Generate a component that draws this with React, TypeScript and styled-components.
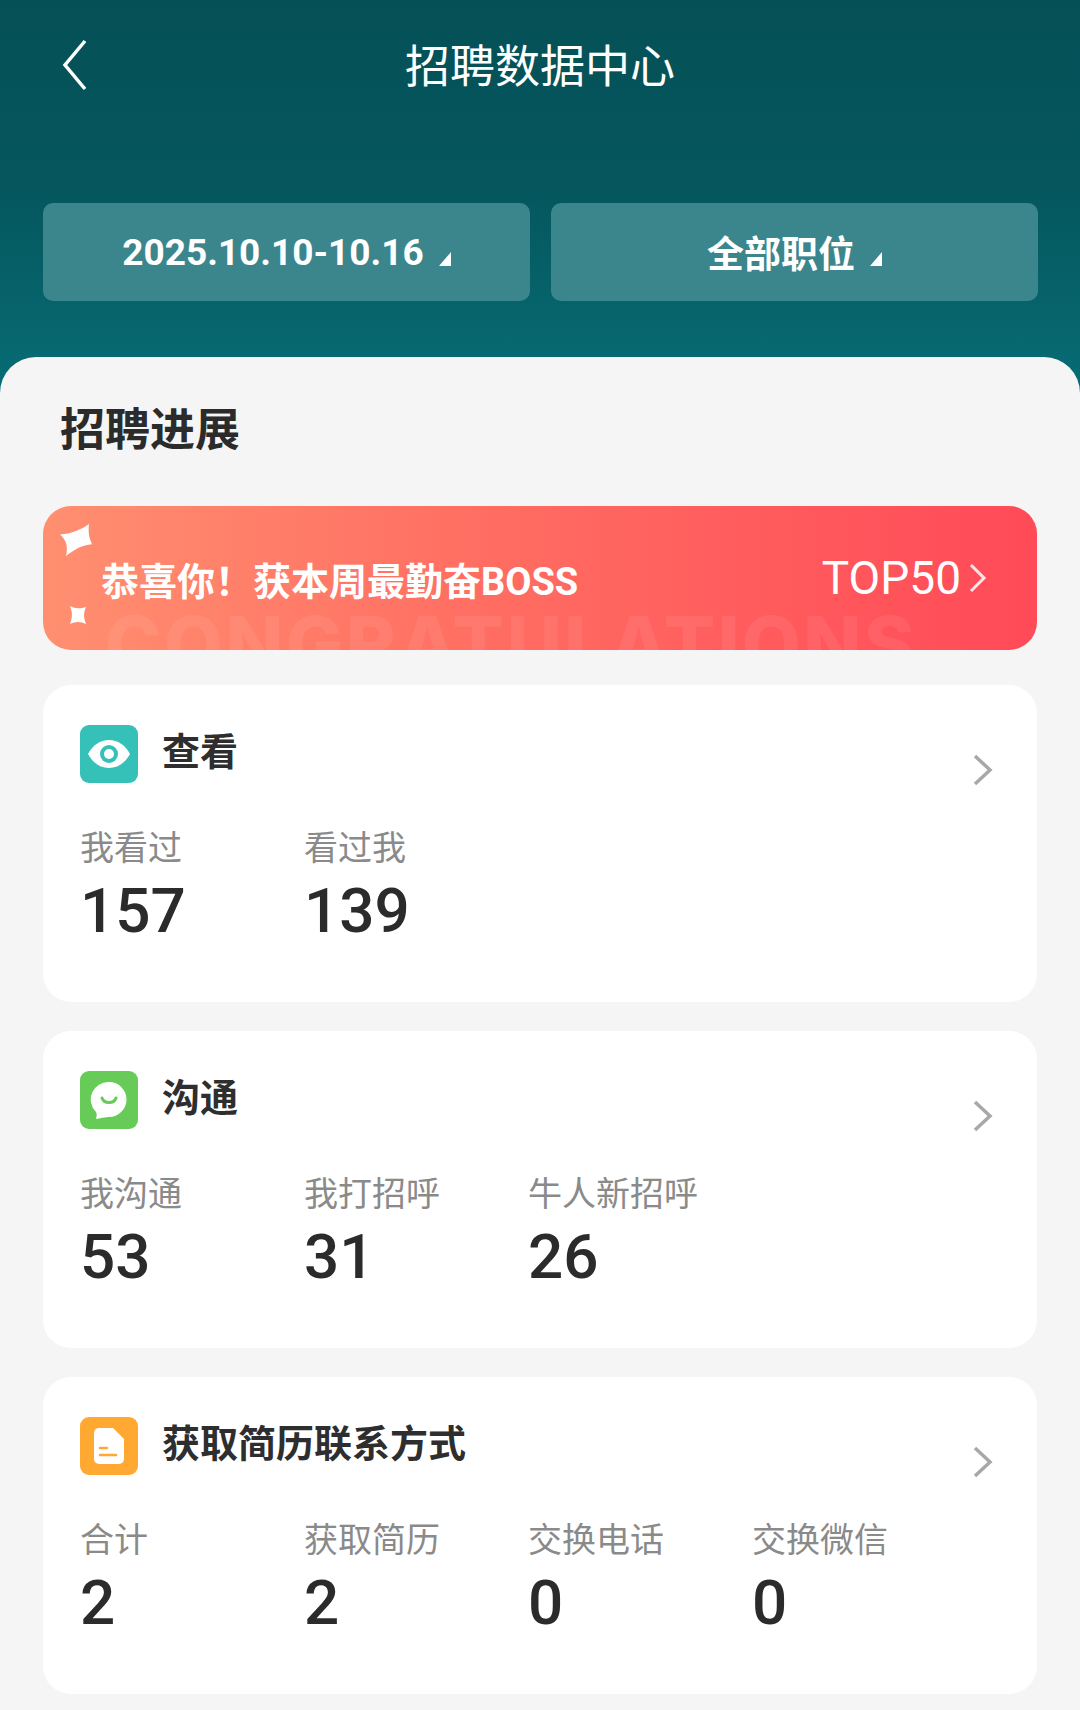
import styled, { createGlobalStyle } from "styled-components";

const GlobalStyle = createGlobalStyle`
  html, body {
    margin: 0;
    padding: 0;
    background: #f5f5f5;
  }
  * {
    box-sizing: border-box;
  }
`;

const Page = styled.div`
  width: 1080px;
  height: 1710px;
  overflow: hidden;
  background: #f5f5f5;
  font-family: "Roboto", "Noto Sans CJK SC", sans-serif;
`;

const Header = styled.header`
  height: 393px;
  padding: 0 43px;
  background: linear-gradient(180deg, #055057 0%, #05575e 50%, #076d75 100%);
`;

const TopBar = styled.div`
  position: relative;
  height: 203px;
  display: flex;
  justify-content: center;
  padding-top: 40px;
`;

const BackButton = styled.svg`
  position: absolute;
  left: 18px;
  top: 36px;
  width: 32px;
  height: 56px;
`;

const Title = styled.h1`
  margin: 0;
  font-size: 45px;
  line-height: 56px;
  font-weight: 400;
  color: #fff;
`;

const Filters = styled.div`
  display: grid;
  grid-template-columns: 487px 487px;
  gap: 21px;
`;

const Filter = styled.div`
  height: 98px;
  border-radius: 10px;
  background: #3b868c;
  color: #fff;
  font-size: 37px;
  font-weight: 700;
  display: flex;
  align-items: center;
  justify-content: center;
  gap: 15px;
  padding-right: 0;
`;

const Caret = styled.span`
  width: 0;
  height: 0;
  margin-top: 14px;
  border-left: 12px solid transparent;
  border-bottom: 14px solid #fff;
`;

const Sheet = styled.main`
  margin-top: -36px;
  height: 1353px;
  padding: 0 43px;
  background: #f5f5f5;
  border-radius: 36px 36px 0 0;
  position: relative;
`;

const SectionTitle = styled.h2`
  margin: 0;
  padding: 44px 0 0 17px;
  height: 149px;
  font-size: 45px;
  line-height: 60px;
  font-weight: 700;
  color: #2b2b2b;
`;

const Banner = styled.div`
  position: relative;
  height: 144px;
  border-radius: 28px;
  overflow: hidden;
  background: linear-gradient(90deg, #ff8f70 0%, #ff6d62 45%, #ff4a58 100%);
  color: #fff;
  display: flex;
  align-items: center;
  justify-content: space-between;
  padding: 0 50px 0 58px;
`;

const Watermark = styled.span`
  position: absolute;
  left: 62px;
  top: 92px;
  font-family: "Inter", sans-serif;
  font-size: 76px;
  line-height: 90px;
  font-weight: 800;
  letter-spacing: 2.5px;
  white-space: nowrap;
  color: rgba(255, 255, 255, 0.07);
`;

const Sparkle = styled.svg<{ $left: number; $top: number; $size: number }>`
  position: absolute;
  left: ${(p) => p.$left}px;
  top: ${(p) => p.$top}px;
  width: ${(p) => p.$size}px;
  height: ${(p) => p.$size}px;
`;

const BannerText = styled.span`
  position: relative;
  font-size: 38px;
  font-weight: 700;
`;

const BannerRank = styled.span`
  position: relative;
  display: flex;
  align-items: center;
  gap: 8px;
  font-size: 46px;
  font-weight: 400;
`;

const CardList = styled.div`
  margin-top: 35px;
  display: flex;
  flex-direction: column;
  gap: 29px;
`;

const Card = styled.section`
  height: 317px;
  padding: 40px 37px 0;
  border-radius: 28px;
  background: #fff;
`;

const CardHead = styled.div`
  display: flex;
  align-items: flex-start;
  gap: 24px;
  height: 100px;
`;

const IconBox = styled.div<{ $color: string }>`
  width: 58px;
  height: 58px;
  border-radius: 9px;
  background: ${(p) => p.$color};
  display: flex;
  align-items: center;
  justify-content: center;
`;

const CardTitle = styled.h3`
  flex: 1;
  margin: 0;
  font-size: 38px;
  line-height: 54px;
  font-weight: 700;
  color: #2e2e2e;
`;

const CardArrow = styled.svg`
  width: 22px;
  height: 34px;
  margin: 28px 6px 0 0;
`;

const Metrics = styled.div`
  display: grid;
  grid-template-columns: repeat(4, 224px);
`;

const Metric = styled.div`
  display: flex;
  flex-direction: column;
`;

const MetricLabel = styled.span`
  font-size: 34px;
  line-height: 46px;
  color: #8a8a8a;
`;

const MetricValue = styled.span`
  margin-top: 2px;
  font-size: 62px;
  line-height: 76px;
  font-weight: 500;
  color: #2b2b2b;
`;

const cards = [
  {
    title: "查看",
    color: "#35c1b8",
    icon: (
      <svg width="44" height="30" viewBox="0 0 44 30">
        <path d="M1 15C6 6 13 1 22 1s16 5 21 14c-5 9-12 14-21 14S6 24 1 15Z" fill="#fff" />
        <circle cx="22" cy="15" r="9" fill="#35c1b8" />
        <circle cx="22" cy="15" r="5" fill="#fff" />
      </svg>
    ),
    metrics: [
      { label: "我看过", value: "157" },
      { label: "看过我", value: "139" },
    ],
  },
  {
    title: "沟通",
    color: "#67cc57",
    icon: (
      <svg width="38" height="38" viewBox="0 0 38 38">
        <path d="M19 1a17.500 17.500 0 0 1 0 35c-4 0-8 1-12 2-1 0-1-1-1-1 1-2 1-4 0-6A17.500 17.500 0 0 1 19 1Z" fill="#fff" />
        <path d="M12 17c2 6 12 6 14 0" fill="none" stroke="#67cc57" strokeWidth="3" strokeLinecap="round" />
      </svg>
    ),
    metrics: [
      { label: "我沟通", value: "53" },
      { label: "我打招呼", value: "31" },
      { label: "牛人新招呼", value: "26" },
    ],
  },
  {
    title: "获取简历联系方式",
    color: "#ffa933",
    icon: (
      <svg width="30" height="36" viewBox="0 0 30 36">
        <path d="M5 0h14l11 11v20a5 5 0 0 1-5 5H5a5 5 0 0 1-5-5V5a5 5 0 0 1 5-5Z" fill="#fff" />
        <path d="M6 20h7M6 27h16" stroke="#ffa933" strokeWidth="2.500" strokeLinecap="round" />
      </svg>
    ),
    metrics: [
      { label: "合计", value: "2" },
      { label: "获取简历", value: "2" },
      { label: "交换电话", value: "0" },
      { label: "交换微信", value: "0" },
    ],
  },
];

export default function App() {
  return (
    <Page>
      <GlobalStyle />
      <Header>
        <TopBar>
          <BackButton viewBox="0 0 32 56">
            <path d="M24 5 4 29l20 24" fill="none" stroke="#fff" strokeWidth="3.500" />
          </BackButton>
          <Title>招聘数据中心</Title>
        </TopBar>
        <Filters>
          <Filter>
            2025.10.10-10.16
            <Caret />
          </Filter>
          <Filter>
            全部职位
            <Caret />
          </Filter>
        </Filters>
      </Header>
      <Sheet>
        <SectionTitle>招聘进展</SectionTitle>
        <Banner>
          <Watermark>CONGRATULATIONS</Watermark>
          <Sparkle $left={17} $top={18} $size={32} viewBox="0 0 32 46" preserveAspectRatio="none">
            <path d="M29 0c-1 12 0 20 3 29-10 1-17 7-26 17 2-13 1-22-6-31C11 14 20 9 29 0Z" fill="#fff" />
          </Sparkle>
          <Sparkle $left={26} $top={100} $size={18} viewBox="0 0 18 20">
            <path d="M0 0c6 3 11 3 18 1-3 6-3 12 0 19-6-3-12-3-18 0 3-7 3-13 0-20Z" fill="#fff" />
          </Sparkle>
          <BannerText>恭喜你！获本周最勤奋BOSS</BannerText>
          <BannerRank>
            TOP50
            <svg width="18" height="30" viewBox="0 0 18 30">
              <path d="M2 2l13 13L2 28" fill="none" stroke="#fff" strokeOpacity="0.85" strokeWidth="3" />
            </svg>
          </BannerRank>
        </Banner>
        <CardList>
          {cards.map((card) => (
            <Card key={card.title}>
              <CardHead>
                <IconBox $color={card.color}>{card.icon}</IconBox>
                <CardTitle>{card.title}</CardTitle>
                <CardArrow viewBox="0 0 22 34">
                  <path d="M3 3l15 14L3 31" fill="none" stroke="#a8a8a8" strokeWidth="3.500" />
                </CardArrow>
              </CardHead>
              <Metrics>
                {card.metrics.map((m) => (
                  <Metric key={m.label}>
                    <MetricLabel>{m.label}</MetricLabel>
                    <MetricValue>{m.value}</MetricValue>
                  </Metric>
                ))}
              </Metrics>
            </Card>
          ))}
        </CardList>
      </Sheet>
    </Page>
  );
}
